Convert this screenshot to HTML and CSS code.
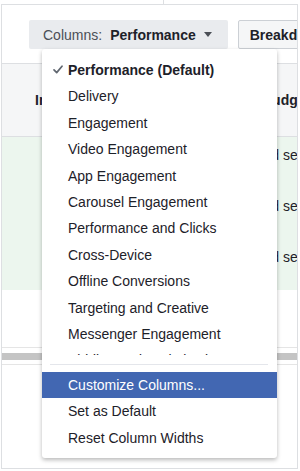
FILE: index.html
```html
<!DOCTYPE html>
<html lang="en">
<head>
    <meta charset="UTF-8">
    <meta name="viewport" content="width=device-width, initial-scale=1.0">
    <title>Columns: Performance</title>
    <link rel="stylesheet" href="styles.css">
</head>
<body>
    <div class="top-edge"></div>
    <div class="frame">
        <div class="toolbar">
            <div class="btn btn-columns">
                <span>Columns:</span>
                <span class="btn-value">Performance</span>
                <span class="caret"></span>
            </div>
            <div class="btn btn-breakdown">Breakdown</div>
        </div>

        <div class="table">
            <div class="thead">
                <div class="cell-name">Impressions</div>
                <div class="cell-budget">Budget</div>
            </div>
            <div class="row">
                <div class="cell-name"></div>
                <div class="cell-budget">Ad set</div>
            </div>
            <div class="row">
                <div class="cell-name"></div>
                <div class="cell-budget">Ad set</div>
            </div>
            <div class="row">
                <div class="cell-name"></div>
                <div class="cell-budget">Ad set</div>
            </div>
            <div class="row row-total"></div>
            <div class="scrollbar"><div class="scrollbar-thumb"></div></div>
            <div class="table-foot"></div>
        </div>

        <div class="menu">
            <div class="menu-scroll">
                <div class="menu-item is-selected">
                    <svg class="check" width="10" height="9" viewBox="0 0 10 9">
                        <path d="M1 4.8 L3.7 7.6 L9 1.2" fill="none" stroke="#606770" stroke-width="1.7" stroke-linecap="round" stroke-linejoin="round"/>
                    </svg>
                    Performance (Default)
                </div>
                <div class="menu-item">Delivery</div>
                <div class="menu-item">Engagement</div>
                <div class="menu-item">Video Engagement</div>
                <div class="menu-item">App Engagement</div>
                <div class="menu-item">Carousel Engagement</div>
                <div class="menu-item">Performance and Clicks</div>
                <div class="menu-item">Cross-Device</div>
                <div class="menu-item">Offline Conversions</div>
                <div class="menu-item">Targeting and Creative</div>
                <div class="menu-item">Messenger Engagement</div>
                <div class="menu-item">Bidding and Optimization</div>
                <div class="menu-item">Setup</div>
            </div>
            <div class="menu-sep"></div>
            <div class="menu-item is-active">Customize Columns...</div>
            <div class="menu-item">Set as Default</div>
            <div class="menu-item">Reset Column Widths</div>
        </div>
    </div>
</body>
</html>
```

FILE: styles.css
```css
* {
    margin: 0;
    padding: 0;
    box-sizing: border-box;
}

body {
    font-family: "Liberation Sans", Arial, sans-serif;
    font-size: 14px;
    color: #1d2129;
    background: #fff;
}

.top-edge {
    width: 164px;
    height: 4px;
    border-right: 1px solid #dddfe2;
}

.frame {
    position: relative;
    height: 465px;
    margin: 0 2px 0 1px;
    border: 1px solid #dddfe2;
    overflow: hidden;
    display: flex;
    flex-direction: column;
}

.toolbar {
    display: flex;
    gap: 10px;
    padding: 15px 0 14px 27px;
    border-bottom: 1px solid #dddfe2;
    white-space: nowrap;
}

.btn {
    height: 29px;
    display: flex;
    align-items: center;
    border-radius: 2px;
    flex-shrink: 0;
}

.btn-columns {
    background: #e9ebee;
    color: #4b4f56;
    padding: 0 16px 0 14px;
}

.btn-value {
    margin-left: 8px;
    font-weight: bold;
    color: #1d2129;
}

.caret {
    width: 0;
    height: 0;
    margin-left: 8px;
    border-left: 4.5px solid transparent;
    border-right: 4.5px solid transparent;
    border-top: 5px solid #4b4f56;
}

.btn-breakdown {
    background: #f5f6f7;
    border: 1px solid #ccd0d5;
    padding: 0 11px;
    font-weight: bold;
}

.table {
    flex: 1;
    display: flex;
    flex-direction: column;
}

.thead {
    display: flex;
    align-items: center;
    height: 73px;
    background: #f5f6f7;
    border-bottom: 1px solid #dddfe2;
    font-weight: bold;
    white-space: nowrap;
}

.cell-name {
    flex: 1;
    padding-left: 33px;
}

.cell-budget {
    width: 35px;
    white-space: nowrap;
}

.row {
    display: flex;
    height: 51px;
    padding-top: 10px;
    line-height: 16px;
    background: #ecf6ee;
}

.row-total {
    height: 57px;
    background: #fff;
}

.scrollbar {
    height: 18px;
    padding: 5px 0 4px;
    border-top: 1px solid #e5e5e5;
    border-bottom: 1px solid #e5e5e5;
}

.scrollbar-thumb {
    height: 7px;
    background: #c4c4c4;
}

.table-foot {
    flex: 1;
}

.menu {
    position: absolute;
    left: 40px;
    top: 44px;
    width: 235px;
    padding: 8px 0 7px;
    background: #fff;
    border-radius: 3px;
    box-shadow: 0 2px 4px rgba(0, 0, 0, 0.28);
}

.menu-scroll {
    height: 298px;
    overflow: hidden;
}

.menu-item {
    position: relative;
    height: 26.4px;
    line-height: 26.4px;
    padding-left: 26px;
    white-space: nowrap;
    color: #1d2129;
}

.menu-item.is-selected {
    font-weight: bold;
}

.check {
    position: absolute;
    left: 11px;
    top: 8px;
}

.menu-sep {
    height: 1px;
    margin: 9px 9px 7px 8px;
    background: #e4e6eb;
}

.menu-item.is-active {
    background: #4267b2;
    color: #fff;
}
```
